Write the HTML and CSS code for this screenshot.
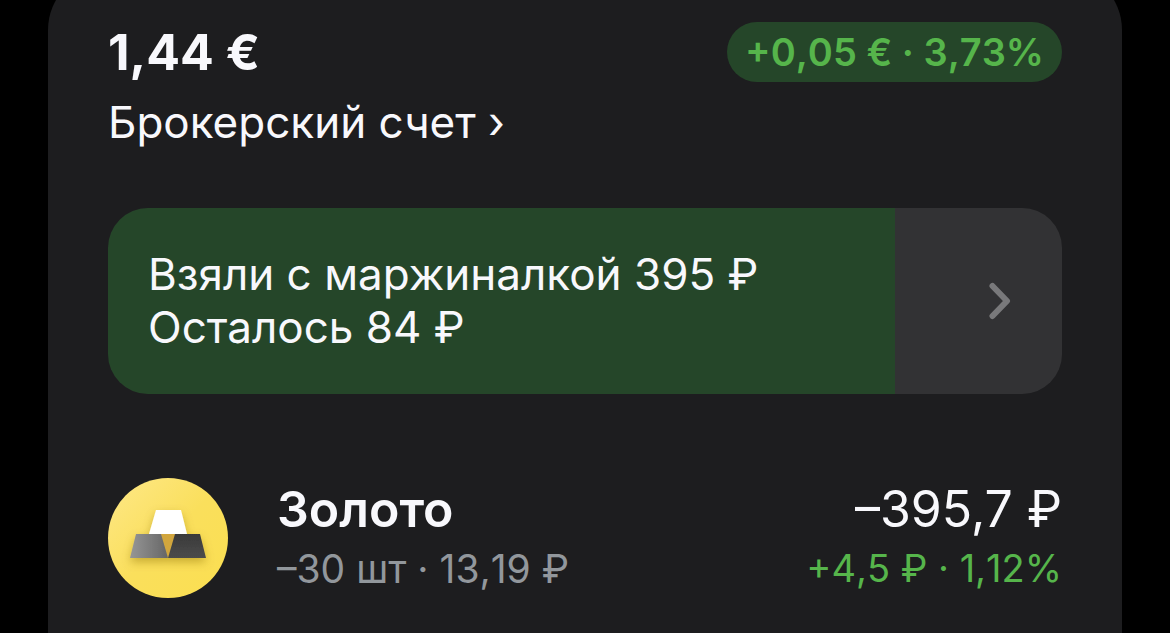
FILE: index.html
```html
<!DOCTYPE html>
<html lang="ru">
<head>
    <meta charset="UTF-8">
    <meta name="viewport" content="width=device-width, initial-scale=1.0">
    <title>Брокерский счет</title>
    <link rel="stylesheet" href="styles.css">
</head>
<body>
    <main class="account">
        <header class="account-header">
            <h1 class="balance">1,44 €</h1>
            <span class="badge">+0,05 € · 3,73%</span>
        </header>
        <a class="account-link" href="#account">Брокерский счет ›</a>

        <a class="margin-card" href="#margin" style="--used: 82.5%">
            <span class="margin-text">Взяли с маржиналкой 395 ₽<br>Осталось 84 ₽</span>
            <svg class="chevron" viewBox="0 0 22 38" aria-hidden="true">
                <path d="M3.5 4 L18 19 L3.5 34" />
            </svg>
        </a>

        <a class="asset" href="#gold">
            <svg class="asset-icon" viewBox="0 0 120 120" aria-hidden="true">
                <defs>
                    <linearGradient id="coin" x1="0" y1="0" x2="1" y2="1">
                        <stop offset="0" stop-color="#fee888" />
                        <stop offset="0.5" stop-color="#fadf5c" />
                        <stop offset="1" stop-color="#fbdf50" />
                    </linearGradient>
                    <linearGradient id="bar-left" x1="0" y1="0" x2="1" y2="0">
                        <stop offset="0" stop-color="#969696" />
                        <stop offset="1" stop-color="#666666" />
                    </linearGradient>
                    <linearGradient id="bar-right" x1="0" y1="0" x2="0" y2="1">
                        <stop offset="0" stop-color="#393939" />
                        <stop offset="1" stop-color="#4c4c4c" />
                    </linearGradient>
                    <filter id="shadow" x="-30%" y="-30%" width="160%" height="170%">
                        <feDropShadow dx="0" dy="4" stdDeviation="5" flood-color="#8a6a00" flood-opacity="0.45" />
                    </filter>
                </defs>
                <circle cx="60" cy="60" r="60" fill="url(#coin)" />
                <g filter="url(#shadow)">
                    <path d="M53 56 H67 L60 80 Z" fill="#d2a63e" />
                    <path d="M28 56 H53 L60 80 H22 Z" fill="url(#bar-left)" />
                    <path d="M67 56 H92 L98 80 H60 Z" fill="url(#bar-right)" />
                    <path d="M48 32 H73 L79 56 H41 Z" fill="#ffffff" />
                </g>
            </svg>
            <span class="asset-info">
                <span class="asset-name">Золото</span>
                <span class="asset-details">–30 шт · 13,19 ₽</span>
            </span>
            <span class="asset-value">
                <span class="asset-total">–395,7 ₽</span>
                <span class="asset-profit">+4,5 ₽ · 1,12%</span>
            </span>
        </a>
    </main>
</body>
</html>
```
FILE: styles.css
```css
* {
    box-sizing: border-box;
}

body {
    margin: 0;
    min-height: 100vh;
    display: flex;
    overflow: hidden;
    background-color: #000;
    color: #f8f8fc;
    font-family: Inter, "Noto Sans", sans-serif;
}

a {
    color: inherit;
    text-decoration: none;
}

.account {
    flex: 1;
    margin: -30px 48px 0;
    padding: 52px 60px 35px;
    border-radius: 60px 60px 0 0;
    background-color: #1d1d1f;
}

.account-header {
    display: flex;
    justify-content: space-between;
    align-items: center;
}

.balance {
    margin: 0;
    font-size: 50px;
    line-height: 60px;
    font-weight: 700;
}

.badge {
    padding: 0 18px;
    border-radius: 30px;
    background-color: #254629;
    color: #56b54b;
    font-size: 38px;
    line-height: 60px;
    font-weight: 600;
    font-kerning: none;
}

.account-link {
    display: block;
    margin-top: 14px;
    font-size: 44px;
    line-height: 52px;
}

.margin-card {
    display: flex;
    justify-content: space-between;
    align-items: center;
    margin-top: 60px;
    padding: 40px 51px 40px 40px;
    border-radius: 40px;
    background: linear-gradient(to right, #254629 var(--used), #323234 var(--used));
    font-size: 44px;
    line-height: 53px;
}

.chevron {
    width: 22px;
    height: 38px;
    fill: none;
    stroke: #79797b;
    stroke-width: 6;
    stroke-linecap: round;
    stroke-linejoin: round;
}

.asset {
    display: flex;
    align-items: center;
    margin-top: 84px;
}

.asset-icon {
    width: 120px;
    height: 120px;
    margin-right: 49px;
}

.asset-info,
.asset-value {
    display: flex;
    flex-direction: column;
    padding-top: 2px;
    line-height: 59px;
}

.asset-value {
    margin-left: auto;
    text-align: right;
}

.asset-name,
.asset-total {
    font-size: 50px;
}

.asset-name {
    font-weight: 600;
}

.asset-details,
.asset-profit {
    font-kerning: none;
}

.asset-details {
    font-size: 39px;
    color: #92979c;
}

.asset-profit {
    font-size: 38px;
    color: #56b54b;
}
```
